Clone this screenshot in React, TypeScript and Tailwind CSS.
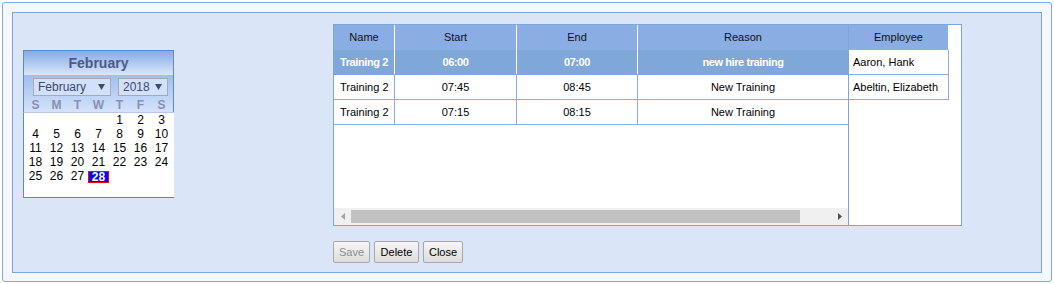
import React from "react";

const font = { fontFamily: '"Liberation Sans", Arial, sans-serif' };

const weeks: (number | null)[][] = [
  [null, null, null, null, 1, 2, 3],
  [4, 5, 6, 7, 8, 9, 10],
  [11, 12, 13, 14, 15, 16, 17],
  [18, 19, 20, 21, 22, 23, 24],
  [25, 26, 27, 28, null, null, null],
];

function Select({ label, w }: { label: string; w: string }) {
  return (
    <div
      className={`${w} h-[18px] border border-[#a3a9bd] bg-[#d3e0fa] flex items-center justify-between pl-[4px] pr-[5px] text-[12px] text-[#3d4a6b]`}
    >
      <span className="leading-none">{label}</span>
      <svg width="7" height="6" viewBox="0 0 7 6">
        <path d="M0 0h7L3.5 6z" fill="#3d4a6b" />
      </svg>
    </div>
  );
}

function Calendar() {
  return (
    <div className="w-[151px] mt-[37px] ml-[10px]">
      <div className="border border-b-0 border-[#5b8bc9]">
        <div className="h-[24px] flex items-center justify-center bg-gradient-to-b from-[#86abe4] to-[#dae6fa] text-[14px] font-bold text-[#4d5a87]">
          February
        </div>
        <div className="bg-gradient-to-b from-[#9ebdee] to-[#d6e3fa] h-[37px]">
          <div className="flex items-center pt-[3px] pl-[9px] gap-[7px]">
            <Select label="February" w="w-[78px]" />
            <Select label="2018" w="w-[50px]" />
          </div>
          <div className="grid grid-cols-[repeat(7,21px)] pl-[1px] text-[12px] font-bold text-[#8592b3] leading-[14px] mt-[2px]">
            {["S", "M", "T", "W", "T", "F", "S"].map((d, i) => (
              <div key={i} className="text-center">
                {d}
              </div>
            ))}
          </div>
        </div>
      </div>
      <div className="h-[86px] bg-white border-l border-b border-[#5b8bc9] border-t border-t-[#b7c9e6]">
        {weeks.map((w, ri) => (
          <div key={ri} className="grid grid-cols-[repeat(7,21px)] pl-[1px] h-[14px] text-[12px] leading-[14px] text-black">
            {w.map((d, ci) => (
              <div key={ci} className="text-center">
                {d === 28 ? (
                  <span className="inline-block w-[21px] h-[12px] mt-[2px] leading-[10px] bg-[#0000ff] border border-[#ff0000] text-white font-bold">
                    28
                  </span>
                ) : (
                  d ?? ""
                )}
              </div>
            ))}
          </div>
        ))}
      </div>
    </div>
  );
}

const rows = [
  { name: "Training 2", start: "06:00", end: "07:00", reason: "new hire training", sel: true },
  { name: "Training 2", start: "07:45", end: "08:45", reason: "New Training", sel: false },
  { name: "Training 2", start: "07:15", end: "08:15", reason: "New Training", sel: false },
];

function Grid() {
  const cols = ["w-[61px]", "w-[122px]", "w-[121px]", "w-[210px]"];
  return (
    <div className="flex">
      <div className="w-[516px] h-[202px] border border-[#7fa6dc] bg-white flex flex-col">
        <div className="flex h-[25px] bg-[#8aade4] text-[11px] text-[#111]">
          {["Name", "Start", "End", "Reason"].map((h, i) => (
            <div
              key={h}
              className={`${cols[i]} flex items-center justify-center ${i < 3 ? "border-r border-white" : ""}`}
            >
              {h}
            </div>
          ))}
        </div>
        {rows.map((r, ri) => (
          <div
            key={ri}
            className={`flex h-[25px] text-[11px] ${
              r.sel
                ? "bg-[#7fa8d9] text-white font-bold tracking-[-0.4px] border-b border-[#7fa8d9]"
                : "bg-white text-black border-b border-[#8aaedf]"
            }`}
          >
            {[r.name, r.start, r.end, r.reason].map((c, i) => (
              <div
                key={i}
                className={`${cols[i]} flex items-center whitespace-nowrap ${i === 0 ? "justify-start pl-[6px]" : "justify-center"} ${
                  i < 3 ? (r.sel ? "border-r border-white" : "border-r border-[#8aaedf]") : ""
                }`}
              >
                {c}
              </div>
            ))}
          </div>
        ))}
        <div className="flex-1" />
        <div className="h-[17px] bg-[#f0f0f0] flex items-center">
          <div className="w-[17px] flex items-center justify-center">
            <svg width="4" height="7" viewBox="0 0 4 7">
              <path d="M4 0v7L0 3.5z" fill="#a3a3a3" />
            </svg>
          </div>
          <div className="w-[449px] h-[13px] bg-[#c1c1c1]" />
          <div className="flex-1 flex items-center justify-end pr-[6px]">
            <svg width="4" height="7" viewBox="0 0 4 7">
              <path d="M0 0v7L4 3.5z" fill="#505050" />
            </svg>
          </div>
        </div>
      </div>
      <div className="w-[113px] h-[202px] border border-l-0 border-[#7fa6dc] bg-white">
        <div className="w-[100px] h-[25px] bg-[#8aade4] border-r border-white flex items-center justify-center text-[11px] text-[#111]">
          Employee
        </div>
        {["Aaron, Hank", "Abeltin, Elizabeth"].map((e) => (
          <div
            key={e}
            className="w-[100px] h-[25px] border-r border-b border-[#8aaedf] flex items-center pl-[4px] text-[11px] text-black whitespace-nowrap"
          >
            {e}
          </div>
        ))}
      </div>
    </div>
  );
}

function Btn({ label, w, disabled }: { label: string; w: string; disabled?: boolean }) {
  return (
    <div
      className={`${w} h-[22px] border border-[#a8a8a8] rounded-[2px] bg-gradient-to-b from-[#f6f6f6] to-[#dddddd] flex items-center justify-center text-[11px] ${
        disabled ? "text-[#8c8c8c]" : "text-black"
      }`}
    >
      {label}
    </div>
  );
}

export default function App() {
  return (
    <div style={font} className="w-[1054px] h-[284px] bg-white pt-[2px] pl-[2px]">
      <div className="w-[1050px] h-[280px] border border-[#7ea8de] rounded-[3px] bg-[#f4f8fe] p-[9px]">
        <div className="h-[261px] border border-[#7ea6dc] bg-[#dae5f8] flex">
          <Calendar />
          <div className="ml-[159px] mt-[11px] flex flex-col">
            <Grid />
            <div className="flex gap-[4px] mt-[15px]">
              <Btn label="Save" w="w-[37px]" disabled />
              <Btn label="Delete" w="w-[45px]" />
              <Btn label="Close" w="w-[40px]" />
            </div>
          </div>
        </div>
      </div>
    </div>
  );
}
